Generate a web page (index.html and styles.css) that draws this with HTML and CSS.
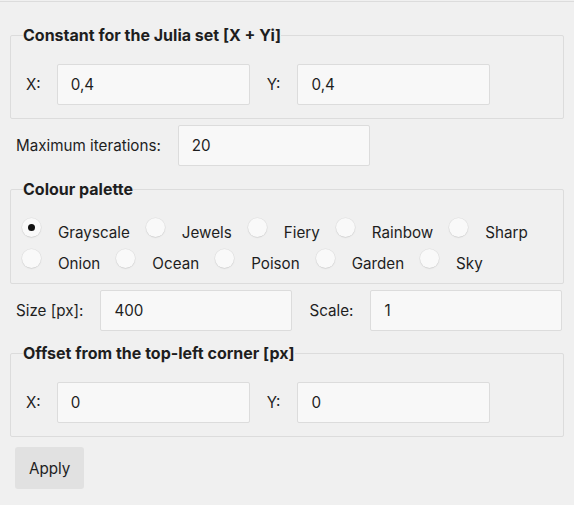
FILE: index.html
```html
<!DOCTYPE html>
<html>
<head>
<meta charset="utf-8">
<link rel="stylesheet" href="styles.css">
</head>
<body>
<div class="topline"></div>
<form class="main">
  <fieldset class="group g1">
    <legend>Constant for the Julia set [X + Yi]</legend>
    <div class="pair">
      <label class="lbl">X:</label><input class="field" type="text" value="0,4">
      <label class="lbl lbl2">Y:</label><input class="field" type="text" value="0,4">
    </div>
  </fieldset>

  <div class="row r1">
    <label class="lbl">Maximum iterations:</label><input class="field" type="text" value="20">
  </div>

  <fieldset class="group g2">
    <legend>Colour palette</legend>
    <div class="radios">
      <span class="opt"><span class="radio checked"></span><span class="rtext">Grayscale</span></span>
      <span class="opt"><span class="radio"></span><span class="rtext">Jewels</span></span>
      <span class="opt"><span class="radio"></span><span class="rtext">Fiery</span></span>
      <span class="opt"><span class="radio"></span><span class="rtext">Rainbow</span></span>
      <span class="opt"><span class="radio"></span><span class="rtext">Sharp</span></span>
      <span class="opt"><span class="radio"></span><span class="rtext">Onion</span></span>
      <span class="opt"><span class="radio"></span><span class="rtext">Ocean</span></span>
      <span class="opt"><span class="radio"></span><span class="rtext">Poison</span></span>
      <span class="opt"><span class="radio"></span><span class="rtext">Garden</span></span>
      <span class="opt"><span class="radio"></span><span class="rtext">Sky</span></span>
    </div>
  </fieldset>

  <div class="row r2">
    <label class="lbl">Size [px]:</label><input class="field" type="text" value="400">
    <label class="lbl lbl2">Scale:</label><input class="field" type="text" value="1">
  </div>

  <fieldset class="group g3">
    <legend>Offset from the top-left corner [px]</legend>
    <div class="pair">
      <label class="lbl">X:</label><input class="field" type="text" value="0">
      <label class="lbl lbl2">Y:</label><input class="field" type="text" value="0">
    </div>
  </fieldset>

  <div class="actions">
    <button class="btn" type="button">Apply</button>
  </div>
</form>
</body>
</html>
```

FILE: styles.css
```css
html, body {
  margin: 0;
  padding: 0;
  background: #f0f0f0;
}
body {
  font-family: Inter, "Noto Sans", sans-serif;
  font-size: 15.2px;
  color: #1e1e1e;
}
.topline {
  height: 1px;
  margin-top: 1px;
  background: #dcdcdc;
}
.main {
  display: flex;
  flex-direction: column;
  padding: 23px 10px 0 10px;
}
.group {
  margin: 0;
  padding: 0 15px 13px 15px;
  border: 1px solid #dcdcdc;
  border-radius: 2px;
}
.group legend {
  font-weight: 700;
  font-size: 16px;
  padding: 0;
  margin-left: -3px;
  line-height: 20px;
}
.pair, .row {
  display: flex;
  align-items: center;
}
.pair {
  margin-top: 19px;
}
.row {
  padding-left: 6px;
}
.lbl {
  margin-right: 17px;
}
.pair .lbl {
  margin-right: 16px;
}
.lbl2 {
  margin-left: 17px;
}
.pair .lbl2 {
  margin-left: 17px;
  margin-right: 17px;
}
.field {
  box-sizing: border-box;
  width: 192px;
  height: 41px;
  margin: 0;
  padding: 0 13px;
  border: 1px solid #dcdcdc;
  border-radius: 2px;
  background: #f8f8f8;
  font: inherit;
  color: inherit;
  outline: none;
}
.pair .field {
  width: 193px;
}
.r1 { margin-top: 6px; margin-bottom: 13px; }
.r2 { margin-top: 6px; margin-bottom: 12px; }
.g2 {
  padding-bottom: 9px;
}
.radios {
  display: flex;
  flex-wrap: wrap;
  margin-top: 20px;
  margin-left: -4px;
  row-gap: 7px;
}
.opt {
  display: inline-flex;
  align-items: baseline;
  margin-right: 16px;
  line-height: 21px;
}
.radio {
  display: inline-block;
  box-sizing: border-box;
  width: 19px;
  height: 19px;
  border-radius: 50%;
  background: #f9f9f9;
  box-shadow: 0 0 0 0.5px rgba(0,0,0,0.06), 0 0.5px 1.5px rgba(0,0,0,0.12);
  margin-right: 17px;
  position: relative;
  top: -1px;
}
.radio.checked::after {
  content: "";
  position: absolute;
  left: 6px;
  top: 6px;
  width: 7px;
  height: 7px;
  border-radius: 50%;
  background: #111;
}
.actions {
  margin-top: 10px;
  padding-left: 5px;
}
.btn {
  height: 42px;
  padding: 0 14px;
  border: none;
  border-radius: 3px;
  background: #e1e1e1;
  font: inherit;
  color: inherit;
}
```
